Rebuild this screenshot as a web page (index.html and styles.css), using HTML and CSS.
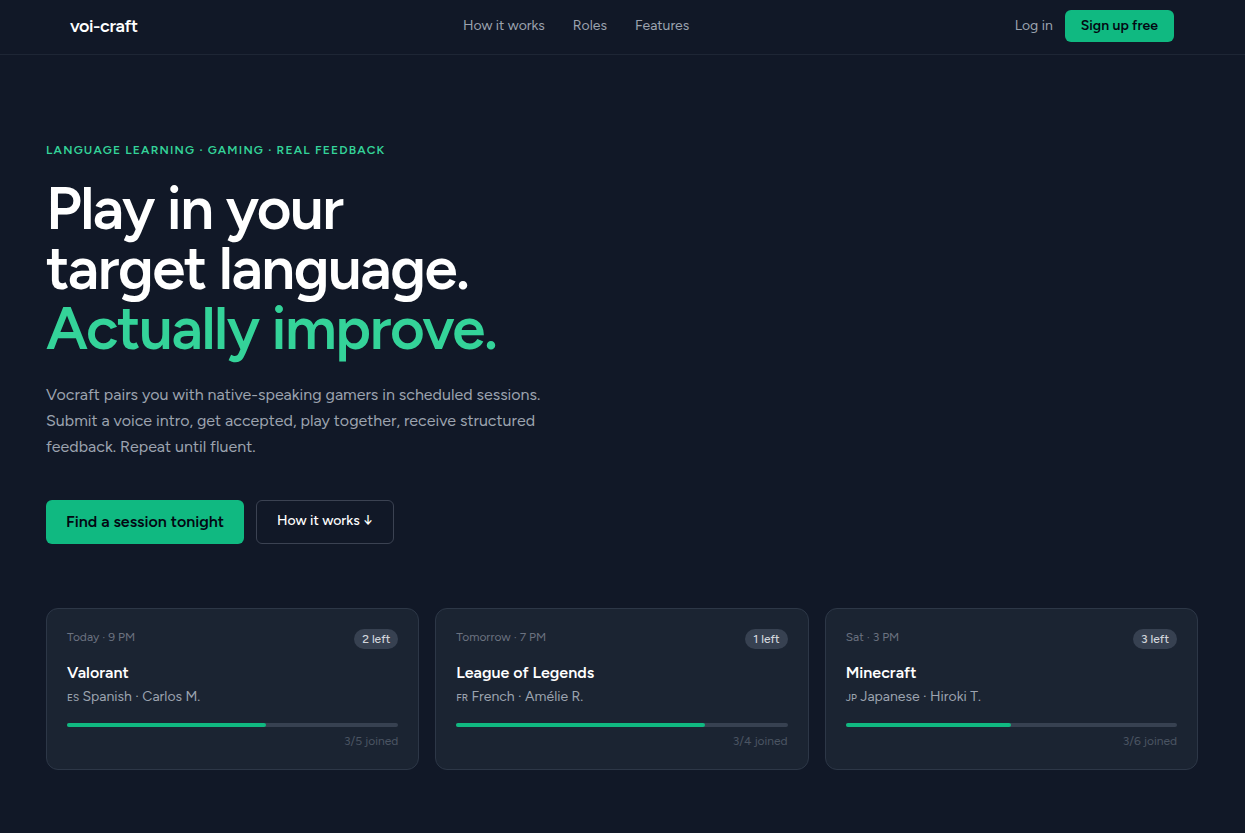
FILE: index.html
```html
<!DOCTYPE html>
<html lang="en">

<head>
  <meta charset="UTF-8">
  <meta name="viewport" content="width=device-width, initial-scale=1.0">
  <title>voi-craft</title>
  <link rel="stylesheet" href="styles.css">
</head>

<body>
  <header class="header">
    <div class="header-inner">
      <a class="logo" href="/">voi-craft</a>
      <nav class="nav">
        <a href="#how">How it works</a>
        <a href="#roles">Roles</a>
        <a href="#features">Features</a>
      </nav>
      <div class="account">
        <a class="login" href="/login">Log in</a>
        <a class="signup" href="/register">Sign up free</a>
      </div>
    </div>
  </header>

  <main class="main">
    <section class="hero">
      <p class="eyebrow">Language learning · Gaming · Real feedback</p>
      <h1 class="title">Play in your<br>target language.<br><span class="accent">Actually improve.</span></h1>
      <p class="intro">Vocraft pairs you with native-speaking gamers in scheduled sessions. Submit a voice intro, get accepted, play together, receive structured feedback. Repeat until fluent.</p>

      <div class="actions">
        <a class="btn btn-primary" href="/sessions">Find a session tonight</a>
        <a class="btn btn-outline" href="#how">How it works ↓</a>
      </div>

      <div class="sessions">
        <article class="card">
          <div class="card-top">
            <span class="time">Today · 9 PM</span>
            <span class="badge">2 left</span>
          </div>
          <h2 class="game">Valorant</h2>
          <p class="host"><span class="flag">ES</span> Spanish · Carlos M.</p>
          <div class="bar"><div class="bar-fill" style="width: 60%"></div></div>
          <p class="joined">3/5 joined</p>
        </article>

        <article class="card">
          <div class="card-top">
            <span class="time">Tomorrow · 7 PM</span>
            <span class="badge">1 left</span>
          </div>
          <h2 class="game">League of Legends</h2>
          <p class="host"><span class="flag">FR</span> French · Amélie R.</p>
          <div class="bar"><div class="bar-fill" style="width: 75%"></div></div>
          <p class="joined">3/4 joined</p>
        </article>

        <article class="card">
          <div class="card-top">
            <span class="time">Sat · 3 PM</span>
            <span class="badge">3 left</span>
          </div>
          <h2 class="game">Minecraft</h2>
          <p class="host"><span class="flag">JP</span> Japanese · Hiroki T.</p>
          <div class="bar"><div class="bar-fill" style="width: 50%"></div></div>
          <p class="joined">3/6 joined</p>
        </article>
      </div>
    </section>
  </main>
</body>

</html>
```
FILE: styles.css
```css
* {
  box-sizing: border-box;
}

body {
  margin: 0;
  background-color: #111827;
  color: #fff;
  font-family: Figtree, Lato, sans-serif;
  font-size: 16px;
  line-height: 24px;
}

a {
  color: inherit;
  text-decoration: none;
}

h1, h2, p {
  margin: 0;
}

/* header */
.header {
  padding-right: 1px;
  border-bottom: 1px solid #1e2635;
}

.header-inner {
  max-width: 1152px;
  margin: 0 auto;
  padding: 10px 24px 12px;
  display: flex;
  justify-content: space-between;
  align-items: center;
}

.logo {
  font-size: 18px;
  font-weight: 600;
  letter-spacing: -0.025em;
}

.nav {
  display: flex;
  gap: 28px;
  color: #9ca3af;
  font-size: 14px;
  line-height: 20px;
}

.account {
  display: flex;
  align-items: center;
  gap: 12px;
  font-size: 14px;
  line-height: 20px;
}

.login {
  color: #9ca3af;
}

.signup {
  padding: 6px 16px;
  border-radius: 6px;
  background-color: #10b981;
  color: #030712;
  font-weight: 600;
}

/* hero */
.main {
  padding-right: 1px;
}

.hero {
  max-width: 1152px;
  margin: 0 auto;
  padding: 87px 0 62px;
}

.eyebrow {
  margin-bottom: 20px;
  color: #34d399;
  font-size: 12px;
  font-weight: 600;
  line-height: 16px;
  letter-spacing: 0.1em;
  text-transform: uppercase;
}

.title {
  font-size: 60px;
  font-weight: 600;
  line-height: 60px;
  letter-spacing: -0.025em;
}

.accent {
  color: #34d399;
}

.intro {
  max-width: 512px;
  margin-top: 24px;
  color: #9ca3af;
  line-height: 26px;
}

.actions {
  display: flex;
  gap: 12px;
  margin-top: 40px;
}

.btn {
  padding: 10px 20px;
  border-radius: 6px;
}

.btn-primary {
  background-color: #10b981;
  color: #030712;
  font-weight: 600;
}

.btn-outline {
  border: 1px solid #3b4252;
  font-size: 14px;
  font-weight: 500;
  line-height: 20px;
}

/* session cards */
.sessions {
  display: grid;
  grid-template-columns: repeat(3, 1fr);
  gap: 16px;
  margin-top: 64px;
}

.card {
  padding: 20px;
  border: 1px solid #2d3747;
  border-radius: 12px;
  background-color: #1b2432;
}

.card-top {
  display: flex;
  justify-content: space-between;
  align-items: flex-start;
  margin-bottom: 12px;
  font-size: 12px;
  line-height: 16px;
}

.time {
  color: #6b7280;
}

.badge {
  padding: 2px 8px;
  border-radius: 10px;
  background-color: #374151;
  color: #d1d5db;
  font-weight: 500;
}

.game {
  font-size: 16px;
  font-weight: 600;
}

.host {
  margin-top: 2px;
  color: #9ca3af;
  font-size: 14px;
  line-height: 20px;
}

.flag {
  font-size: 10px;
  font-weight: 500;
  line-height: 1;
}

.bar {
  height: 4px;
  margin-top: 16px;
  border-radius: 2px;
  background-color: #374151;
}

.bar-fill {
  height: 4px;
  border-radius: 2px;
  background-color: #10b981;
}

.joined {
  margin-top: 6px;
  color: #4b5563;
  font-size: 12px;
  line-height: 16px;
  text-align: right;
}
```
